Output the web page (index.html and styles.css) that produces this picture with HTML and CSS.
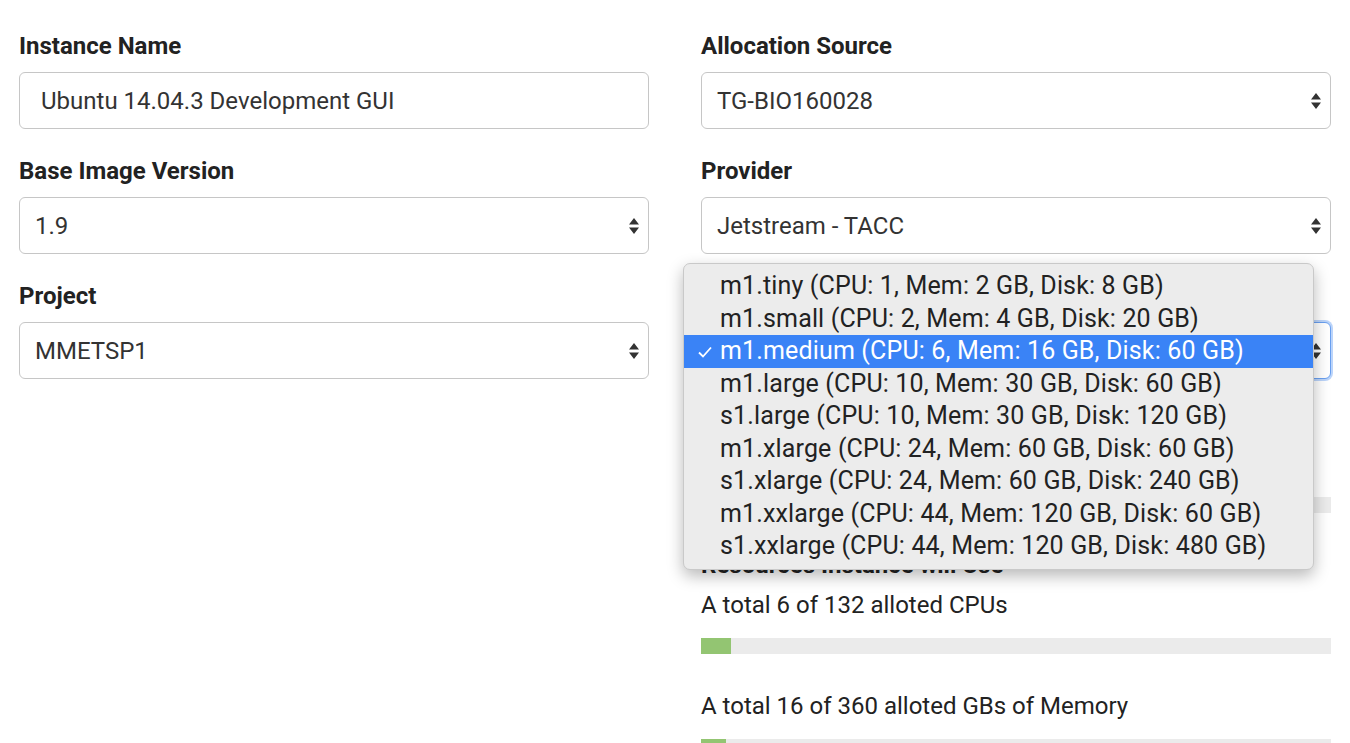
FILE: index.html
```html
<!DOCTYPE html>
<html>
<head>
<meta charset="utf-8">
<link rel="stylesheet" href="styles.css">
</head>
<body>
<div class="page">
  <div class="col">
    <div class="group">
      <div class="label">Instance Name</div>
      <div class="control text-input">Ubuntu 14.04.3 Development GUI</div>
    </div>
    <div class="group">
      <div class="label">Base Image Version</div>
      <div class="control select"><span>1.9</span><svg class="arrows" viewBox="0 0 10 16" width="10" height="16"><path d="M5 0 L10 6.5 H0 Z M5 16 L10 9.5 H0 Z" fill="#333"/></svg></div>
    </div>
    <div class="group">
      <div class="label">Project</div>
      <div class="control select"><span>MMETSP1</span><svg class="arrows" viewBox="0 0 10 16" width="10" height="16"><path d="M5 0 L10 6.5 H0 Z M5 16 L10 9.5 H0 Z" fill="#333"/></svg></div>
    </div>
  </div>
  <div class="col right">
    <div class="group">
      <div class="label">Allocation Source</div>
      <div class="control select"><span>TG-BIO160028</span><svg class="arrows" viewBox="0 0 10 16" width="10" height="16"><path d="M5 0 L10 6.5 H0 Z M5 16 L10 9.5 H0 Z" fill="#333"/></svg></div>
    </div>
    <div class="group">
      <div class="label">Provider</div>
      <div class="control select"><span>Jetstream - TACC</span><svg class="arrows" viewBox="0 0 10 16" width="10" height="16"><path d="M5 0 L10 6.5 H0 Z M5 16 L10 9.5 H0 Z" fill="#333"/></svg></div>
    </div>
    <div class="group">
      <div class="label">Instance Size</div>
      <div class="control select focused"><span></span><svg class="arrows" viewBox="0 0 10 16" width="10" height="16"><path d="M5 0 L10 6.5 H0 Z M5 16 L10 9.5 H0 Z" fill="#333"/></svg></div>
    </div>
    <div class="usage first">
      <div class="usage-text spacer"></div>
      <div class="bar"><div class="fill" style="width: 0%"></div></div>
    </div>
    <div class="heading">Resources Instance will Use</div>
    <div class="usage">
      <div class="usage-text">A total 6 of 132 alloted CPUs</div>
      <div class="bar"><div class="fill" style="width: 4.8%"></div></div>
    </div>
    <div class="usage">
      <div class="usage-text">A total 16 of 360 alloted GBs of Memory</div>
      <div class="bar"><div class="fill" style="width: 4%"></div></div>
    </div>

    <div class="popup">
      <div class="opt">m1.tiny (CPU: 1, Mem: 2 GB, Disk: 8 GB)</div>
      <div class="opt">m1.small (CPU: 2, Mem: 4 GB, Disk: 20 GB)</div>
      <div class="opt selected"><svg class="check" viewBox="0 0 14 12" width="14" height="12"><path d="M1 6.5 L5 10.5 L13 1.5" fill="none" stroke="#fff" stroke-width="1.8"/></svg>m1.medium (CPU: 6, Mem: 16 GB, Disk: 60 GB)</div>
      <div class="opt">m1.large (CPU: 10, Mem: 30 GB, Disk: 60 GB)</div>
      <div class="opt">s1.large (CPU: 10, Mem: 30 GB, Disk: 120 GB)</div>
      <div class="opt">m1.xlarge (CPU: 24, Mem: 60 GB, Disk: 60 GB)</div>
      <div class="opt">s1.xlarge (CPU: 24, Mem: 60 GB, Disk: 240 GB)</div>
      <div class="opt">m1.xxlarge (CPU: 44, Mem: 120 GB, Disk: 60 GB)</div>
      <div class="opt">s1.xxlarge (CPU: 44, Mem: 120 GB, Disk: 480 GB)</div>
    </div>
  </div>
</div>
</body>
</html>
```
FILE: styles.css
```css
html, body {
  margin: 0;
  padding: 0;
  background: #fff;
  overflow: hidden;
}
body {
  font-family: Roboto, "Liberation Sans", sans-serif;
  color: #222;
}
.page {
  display: grid;
  grid-template-columns: 630px 630px;
  column-gap: 52px;
  padding: 33px 19px 0 19px;
}
.col {
  display: flex;
  flex-direction: column;
}
.right {
  position: relative;
}
.group {
  margin-bottom: 29px;
}
.label {
  font-weight: 700;
  font-size: 24px;
  line-height: 26px;
  color: #222;
  margin-bottom: 13px;
}
.control {
  box-sizing: border-box;
  height: 57px;
  border: 1.5px solid #c6c6c6;
  border-radius: 6px;
  background: #fff;
  font-size: 24px;
  color: #333;
  display: flex;
  align-items: center;
}
.text-input {
  padding-left: 21px;
}
.select {
  padding: 0 9px 0 15px;
  justify-content: space-between;
}
.focused {
  border-color: #6aa0f0;
  box-shadow: 0 0 0 2px rgba(120, 170, 245, 0.5);
}
.arrows {
  display: block;
}
.usage {
  display: flex;
  flex-direction: column;
}
.usage.first {
  margin-top: 41px;
}
.usage-text {
  font-size: 24px;
  line-height: 30px;
  color: #222;
  margin-bottom: 18px;
}
.spacer {
  height: 30px;
}
.bar {
  height: 16px;
  background: #ebebeb;
  margin-bottom: 37px;
}
.fill {
  height: 100%;
  background: #93c572;
}
.heading {
  font-weight: 700;
  font-size: 24px;
  line-height: 26px;
  margin-top: 2px;
  margin-bottom: 12px;
}
.popup {
  position: absolute;
  left: -18px;
  top: 230px;
  width: 631px;
  box-sizing: border-box;
  padding: 6px 0;
  background: #ececec;
  border: 1px solid #c9c9c9;
  border-radius: 7px;
  box-shadow: 0 6px 16px rgba(0, 0, 0, 0.28);
}
.opt {
  position: relative;
  height: 32.5px;
  line-height: 32.5px;
  padding-left: 36px;
  font-size: 25px;
  letter-spacing: 0.15px;
  color: #222;
  white-space: nowrap;
}
.opt.selected {
  background: #3a83f6;
  color: #fff;
}
.check {
  position: absolute;
  left: 14px;
  top: 11px;
}
```
